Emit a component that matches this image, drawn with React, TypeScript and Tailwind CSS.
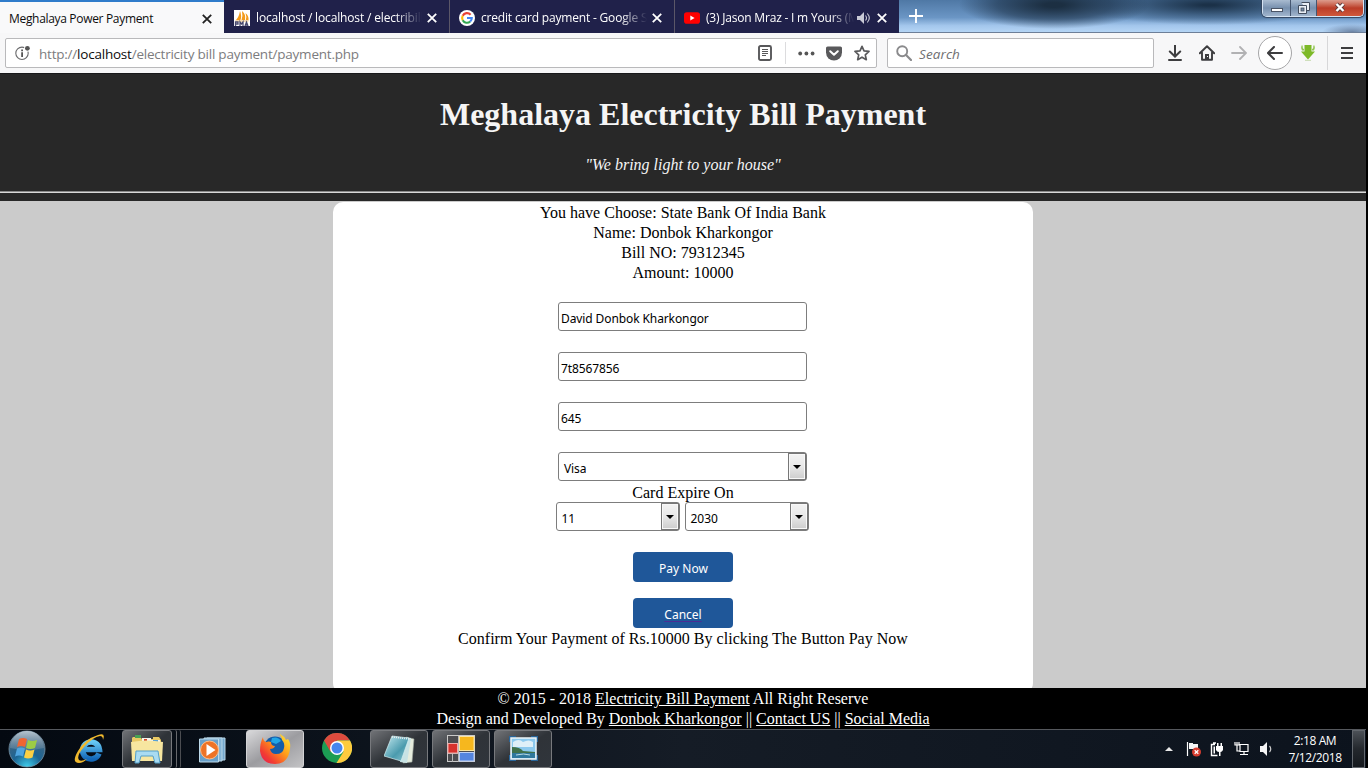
import React from 'react';

const SANS = "font-['Open_Sans','Noto_Sans',sans-serif]";

function Close({ color = '#fff' }: { color?: string }) {
  return (
    <svg width="10" height="10" viewBox="0 0 10 10" className="shrink-0">
      <path d="M.8.8 9.2 9.2M9.2.8.8 9.2" stroke={color} strokeWidth="1.8" fill="none" />
    </svg>
  );
}

function PmaIcon() {
  return (
    <svg width="16" height="16" viewBox="0 0 16 16">
      <rect width="16" height="16" fill="#fff" />
      <path d="M2 10Q5 7 6 1Q8 6 6.5 10zM7.5 10Q9 6 8 1Q12 4 11 10zM11.8 10Q13 7 11.5 3Q15 6 14.5 10z" fill="#f39b1c" />
      <path d="M1 10.5h14l-1 1H2z" fill="#e7b465" />
      <path d="M1.500 16v-4h2.500v2H1.500M6 16v-4l1.500 2L9 12v4M11 16l1.500-4 1.500 4M11.500 15h2" stroke="#47486e" strokeWidth="1.300" fill="none" />
    </svg>
  );
}

function GoogleIcon() {
  return (
    <svg width="16" height="16" viewBox="0 0 16 16">
      <circle cx="8" cy="8" r="8" fill="#fff" />
      <g fill="none" strokeWidth="2.1">
        <path d="M11.6 4.7A4.8 4.8 0 0 0 3.7 5.8" stroke="#ea4335" />
        <path d="M3.7 5.8a4.8 4.8 0 0 0 0 4.4" stroke="#fbbc05" />
        <path d="M3.7 10.2a4.8 4.8 0 0 0 7.5 1.3" stroke="#34a853" />
        <path d="M11.2 11.5A4.8 4.8 0 0 0 12.8 8H8" stroke="#4285f4" />
      </g>
    </svg>
  );
}

function YouTubeIcon() {
  return (
    <svg width="16" height="16" viewBox="0 0 16 16">
      <rect y="2.3" width="16" height="11.4" rx="2.8" fill="#f00" />
      <path d="M6.3 5.6 10.6 8l-4.3 2.4z" fill="#fff" />
    </svg>
  );
}

function Speaker() {
  return (
    <svg width="14" height="12" viewBox="0 0 14 12" className="shrink-0">
      <path d="M0 4h3l4-4v12L3 8H0z" fill="#c9cad6" />
      <path d="M8.500 3.500Q10.500 6 8.500 8.500M10.300 1.500Q14.300 6 10.300 10.500" stroke="#c9cad6" strokeWidth="1.100" fill="none" />
    </svg>
  );
}

function Tab({ icon, title, width, line, audio }: { icon: React.ReactNode; title: React.ReactNode; width: string; line: string; audio?: boolean }) {
  return (
    <div className={`${line} flex h-[33px] w-[225px] items-center border-l bg-[#20214a] pt-[3px] pr-[12px] pl-[9px]`}>
      <div className="w-[22px] shrink-0">{icon}</div>
      <div className={`${width} overflow-hidden text-[12px] whitespace-nowrap text-white [mask-image:linear-gradient(to_right,#000_84%,transparent)]`}>
        {title}
      </div>
      <div className="ml-auto flex items-center gap-[6px]">
        {audio && <Speaker />}
        <Close />
      </div>
    </div>
  );
}

function TitleBar() {
  return (
    <div className="flex h-[33px] bg-[#20214a]">
      <div className="flex h-[33px] w-[224px] items-center justify-between border-t-2 border-[#2f7ccb] bg-[#f9f9fa] pt-[2px] pr-[12px] pl-[9px]">
        <span className="text-[12px] tracking-[-0.32px] whitespace-nowrap text-[#0c0c0d]">Meghalaya Power Payment</span>
        <Close color="#222" />
      </div>
      <Tab icon={<PmaIcon />} line="border-transparent" width="w-[166px]" title={<span className="tracking-[-0.15px]">localhost / localhost / electribill</span>} />
      <Tab icon={<GoogleIcon />} line="border-[#5b5768]" width="w-[166px]" title={<span className="tracking-[-0.18px]">credit card payment - Google S</span>} />
      <Tab icon={<YouTubeIcon />} line="border-[#5b5768]" width="w-[148px]" audio title={<span className="tracking-[-0.2px]">(3) Jason Mraz - I m Yours (M</span>} />
      <div className="flex h-[33px] flex-1 justify-between border-b border-[#6d7f98] bg-[radial-gradient(ellipse_30px_8px_at_453px_32px,#6b83a4,transparent),radial-gradient(ellipse_95px_24px_at_155px_5px,#1c2f42_10%,#1c314899_60%,transparent),radial-gradient(ellipse_130px_20px_at_310px_5px,#1b3148_5%,#26415d99_50%,transparent),linear-gradient(to_bottom,#4f78a5,#6b96c5_55%,#a3c6ec_80%,#b5d5f5)] pr-[2px] pl-[10px]">
        <svg width="14" height="14" viewBox="0 0 14 14" className="mt-[9px]">
          <path d="M7 0v14M0 7h14" stroke="#fff" strokeWidth="1.900" />
        </svg>
        <div className="flex h-[17px] w-[102px] overflow-hidden rounded-b-[5px] border border-t-0 border-[#d5e3f2] shadow-[0_0_1px_1px_#33455f]">
          <div className="flex w-[28px] items-end justify-center border-r border-[#455670] bg-linear-to-b from-[#a9bbd0] via-[#7790ae] to-[#a1b5cd] pb-[4px]">
            <div className="h-[4px] w-[12px] border border-[#4b5566] bg-white" />
          </div>
          <div className="flex w-[26px] justify-center border-r border-[#455670] bg-linear-to-b from-[#a9bbd0] via-[#7790ae] to-[#a1b5cd] pt-[2px]">
            <svg width="12" height="12" viewBox="0 0 12 12">
              <path d="M3.500.5h8v8h-3M.5 3.500h8v8h-8z" fill="#e9eef5" stroke="#414c5d" />
              <rect x="3" y="6" width="3" height="3" fill="#728aa5" stroke="#414c5d" strokeWidth=".8" />
            </svg>
          </div>
          <div className="flex flex-1 justify-center bg-linear-to-b from-[#dc9c8d] via-[#bb3d28] to-[#d0583b] pt-[2px]">
            <svg width="12" height="11" viewBox="0 0 12 11">
              <path d="M2.500 2 9.500 9M9.500 2l-7 7" stroke="#5b3b3b" strokeWidth="4" />
              <path d="M2.500 2 9.500 9M9.500 2l-7 7" stroke="#fff" strokeWidth="2.400" />
            </svg>
          </div>
        </div>
      </div>
    </div>
  );
}

function ToolBar() {
  return (
    <div className="flex h-[41px] items-center border-b border-[#18181a] bg-[#f7f7f8] pl-[5px]">
      <div className="flex h-[30px] w-[872px] items-center rounded-[2px] border border-[#b9b9bb] bg-white pl-[9px]">
        <svg width="16" height="16" viewBox="0 0 16 16">
          <circle cx="7" cy="8.300" r="6.200" fill="none" stroke="#6a6a6c" strokeWidth="1.100" />
          <circle cx="12.400" cy="3.300" r="3.400" fill="#fff" />
          <circle cx="12.400" cy="3.300" r="2.400" fill="#555" />
          <path d="M6.200 7.200h1.800v4.800H6.200zM6.200 4.600h1.800v1.600H6.200z" fill="#555" />
        </svg>
        <span className="ml-[8px] pt-[2px] text-[13.5px] tracking-[-0.22px] whitespace-nowrap text-[#7c7c7e]">
          http://<span className="text-[#0c0c0d]">localhost</span>/electricity bill payment/payment.php
        </span>
        <div className="ml-auto flex items-center pr-[6px]">
          <svg width="14" height="16" viewBox="0 0 14 16">
            <rect x="1" y="1" width="12" height="14" rx="1.500" fill="none" stroke="#58585a" strokeWidth="1.900" />
            <path d="M4 4.500h6M4 6.500h6M4 8.500h6M4 10.500h4" stroke="#58585a" />
          </svg>
          <div className="ml-[13px] h-[22px] w-px bg-[#dcdcde]" />
          <svg width="17" height="5" viewBox="0 0 17 5" className="ml-[12px]">
            <circle cx="2.200" cy="2.500" r="1.900" fill="#555" />
            <circle cx="8.400" cy="2.500" r="1.900" fill="#555" />
            <circle cx="14.600" cy="2.500" r="1.900" fill="#555" />
          </svg>
          <svg width="16" height="15" viewBox="0 0 16 15" className="ml-[11px]">
            <path d="M1.600.5h12.800Q16 .5 16 2v4.500a8 8 0 0 1-16 0V2Q0 .5 1.600.5z" fill="#59595b" />
            <path d="m4.200 5.200 3.800 3.600 3.800-3.600" stroke="#fff" strokeWidth="2" fill="none" strokeLinecap="round" strokeLinejoin="round" />
          </svg>
          <svg width="16" height="16" viewBox="0 0 16 16" className="ml-[12px]">
            <path d="m8 1.300 2 4.600 5 .5-3.700 3.400 1 4.900L8 12.200l-4.300 2.500 1-4.900L1 6.400l5-.5z" fill="none" stroke="#59595b" strokeWidth="1.700" strokeLinejoin="round" />
          </svg>
        </div>
      </div>
      <div className="ml-[10px] flex h-[30px] w-[267px] items-center rounded-[2px] border border-[#b9b9bb] bg-white pl-[8px]">
        <svg width="16" height="16" viewBox="0 0 16 16">
          <circle cx="6.200" cy="6.200" r="5" fill="none" stroke="#8a8a8c" strokeWidth="1.900" />
          <path d="m9.800 9.800 5.200 5.200" stroke="#8a8a8c" strokeWidth="2.200" strokeLinecap="round" />
        </svg>
        <span className="ml-[7px] pt-[2px] text-[13.5px] tracking-[0.1px] text-[#6f6f71] italic">Search</span>
      </div>
      <svg width="14" height="16" viewBox="0 0 14 16" className="ml-[14px]">
        <path d="M7 0v11M1.800 6.500 7 11.500l5.200-5M1 15h12" stroke="#3d3d3f" strokeWidth="2" fill="none" strokeLinecap="round" />
      </svg>
      <svg width="16" height="16" viewBox="0 0 16 16" className="ml-[17px]">
        <path d="M.8 8.300 8 1.200l7.200 7.100M3 7.500v7.300h10V7.500" stroke="#3d3d3f" strokeWidth="1.900" fill="none" strokeLinejoin="round" strokeLinecap="round" />
        <path d="M6 14V9h4v5z" fill="#3d3d3f" />
        <path d="M8 11h1v1H8z" fill="#fff" />
      </svg>
      <svg width="16" height="14" viewBox="0 0 16 14" className="ml-[16px]">
        <path d="M1 7h14M9 1l6 6-6 6" stroke="#b1b1b3" strokeWidth="1.800" fill="none" strokeLinecap="round" />
      </svg>
      <div className="ml-[11px] flex h-[34px] w-[34px] items-center justify-center rounded-full border border-[#a5a5a7] bg-white">
        <svg width="16" height="14" viewBox="0 0 16 14">
          <path d="M15 7H1M7 1 1 7l6 6" stroke="#3d3d3f" strokeWidth="2" fill="none" strokeLinecap="round" />
        </svg>
      </div>
      <svg width="16" height="16" viewBox="0 0 16 16" className="ml-[8px]">
        <path d="M1.500.5Q.5 3 2 5.500h2V4Q2.500 4 2.700.5zM14.500.5q1 2.500-.5 5h-2V4q1.500 0 1.300-3.500z" fill="#93c653" />
        <path d="M4.500 0h7v6.500H15L8 14.500 1 6.500h3.500z" fill="#7db928" />
        <path d="M5 15.300h6" stroke="#c5d9ac" />
      </svg>
      <div className="ml-[11px] h-[34px] w-px bg-[#d7d7d9]" />
      <svg width="12" height="12" viewBox="0 0 12 12" className="ml-[13px]">
        <path d="M0 1h12M0 6h12M0 11h12" stroke="#3d3d3f" strokeWidth="1.900" />
      </svg>
    </div>
  );
}

function Field({ value }: { value: string }) {
  return (
    <div className="mb-[21px] flex h-[29px] w-[249px] items-center rounded-[3px] border border-[#7d7d7d] bg-white pt-[5px] pl-[2px]">
      {value}
    </div>
  );
}

function Select({ value, width }: { value: string; width: string }) {
  return (
    <div className={`${width} flex h-[29px] items-center justify-between rounded-[3px] border border-[#7d7d7d] bg-white pl-[5px]`}>
      <span className="pt-[5px]">{value}</span>
      <div className="flex h-[27px] w-[18px] items-center justify-center border border-[#777] bg-linear-to-b from-[#f3f3f3] via-[#e8e8e8] to-[#cdcdcd] shadow-[inset_0_0_0_1px_#f8f8f8]">
        <svg width="8" height="4" viewBox="0 0 8 4">
          <path d="M0 0h8L4 4z" fill="#000" />
        </svg>
      </div>
    </div>
  );
}

function PaymentPage() {
  return (
    <div className="flex h-[655px] flex-col font-['Liberation_Serif','Times_New_Roman',serif] text-[16px] leading-[20px] text-black">
      <header className="h-[127px] bg-[#282828] text-center text-[#f5f5f5]">
        <h1 className="pt-[22px] text-[32px] leading-[37px] font-bold">Meghalaya Electricity Bill Payment</h1>
        <p className="mt-[22px] italic">"We bring light to your house"</p>
        <div className="mt-[16px] h-[2px] border-t border-b border-t-[#8a8a8a] border-b-[#d8d8d8]" />
      </header>
      <main className="flex h-[487px] justify-center overflow-hidden bg-[#cbcbcb] pt-px">
        <div className="flex h-[491px] w-[700px] flex-col items-center rounded-[10px] bg-white pt-px text-center">
          <p>You have Choose: State Bank Of India Bank</p>
          <p>Name: Donbok Kharkongor</p>
          <p>Bill NO: 79312345</p>
          <p>Amount: 10000</p>
          <div className="mt-[19px] mr-px flex flex-col font-['Noto_Sans','Open_Sans',sans-serif] text-[12px] tracking-[-0.1px]">
            <Field value="David Donbok Kharkongor" />
            <Field value="7t8567856" />
            <Field value="645" />
            <Select value="Visa" width="w-[249px]" />
          </div>
          <p className="mt-[2px] leading-[19px]">Card Expire On</p>
          <div className="mr-[2px] flex gap-[5px] font-['Noto_Sans','Open_Sans',sans-serif] text-[12px]">
            <Select value="11" width="w-[124px]" />
            <Select value="2030" width="w-[124px]" />
          </div>
          <button className="mt-[21px] h-[30px] w-[100px] shrink-0 rounded-[4px] bg-[#1f5799] pt-[3px] pl-px font-['Noto_Sans','Open_Sans',sans-serif] text-[12px] text-white">Pay Now</button>
          <button className="mt-[16px] h-[30px] w-[100px] shrink-0 rounded-[4px] bg-[#1f5799] pt-[3px] font-['Noto_Sans','Open_Sans',sans-serif] text-[12px] text-white">
            <span className="underline decoration-[#4c2d94] underline-offset-2">Cancel</span>
          </button>
          <p className="pt-px tracking-[0.02px]">Confirm Your Payment of Rs.10000 By clicking The Button Pay Now</p>
        </div>
      </main>
      <footer className="h-[41px] bg-black pt-px text-center text-white">
        <p>© 2015 - 2018 <u>Electricity Bill Payment</u> All Right Reserve</p>
        <p>Design and Developed By <u>Donbok Kharkongor</u> || <u>Contact US</u> || <u>Social Media</u></p>
      </footer>
    </div>
  );
}

function StartOrb() {
  return (
    <svg width="38" height="38" viewBox="0 0 38 38">
      <defs>
        <radialGradient id="orb" cx=".5" cy="1" r=".9">
          <stop offset="0" stopColor="#3fd0ee" />
          <stop offset=".45" stopColor="#1c6594" />
          <stop offset="1" stopColor="#48647c" />
        </radialGradient>
        <linearGradient id="gloss" x2="0" y2="1">
          <stop stopColor="#c9d5de" stopOpacity=".85" />
          <stop offset="1" stopColor="#7c95a9" stopOpacity=".35" />
        </linearGradient>
      </defs>
      <circle cx="19" cy="19" r="18" fill="url(#orb)" stroke="#7993a5" strokeWidth=".8" />
      <path d="M2 18a17 17 0 0 1 34 0Q19 22 2 18z" fill="url(#gloss)" />
      <path d="M11 9q4-2 8 0l-2 8q-4-2-8 0z" fill="#ef6532" />
      <path d="M20 10q4 2 9 0l-2 8q-5 2-9 0z" fill="#9ccc45" />
      <path d="M9 18.500q4-2 8 0l-2 8q-4-2-8 0z" fill="#4fa5df" />
      <path d="M18 19.500q4 2 8.500 0l-2 8q-4.500 2-8.500 0z" fill="#fcd044" />
    </svg>
  );
}

function IeIcon() {
  return (
    <svg width="34" height="32" viewBox="0 0 34 32">
      <defs>
        <linearGradient id="ie" x2="0" y2="1">
          <stop stopColor="#67c9f3" />
          <stop offset="1" stopColor="#1267b8" />
        </linearGradient>
      </defs>
      <path d="M26 20.500A8.500 8.500 0 1 1 26.500 16.500H12" fill="none" stroke="url(#ie)" strokeWidth="5.500" />
      <path d="M30 7Q33-1 25 2 12 6 5 18-2 30 6 30q4 0 8-4-6 3-8 1-3-4 5-13Q20 4 27 3q3 0 3 4z" fill="#f0b92e" />
    </svg>
  );
}

function ExplorerIcon() {
  return (
    <svg width="32" height="30" viewBox="0 0 32 30">
      <path d="M2 3h7l2 2h11V3h6l2 3v21H1V4z" fill="#e9c965" />
      <path d="M11 4h9v8h-9zM20 6h9v6h-9z" fill="#f3f4ec" />
      <path d="M4 1h6v3H4z" fill="#4aa254" />
      <path d="M13 5h3v2h-3z" fill="#d8472e" />
      <path d="M22 6h5v2h-5z" fill="#56a2d8" />
      <path d="M0 8q16-3 32 0l-1 19H1z" fill="#f7e6a0" />
      <path d="M5 17h22l2 12h-5l-2-7H10l-2 7H4z" fill="#a9dbf2" stroke="#559fc8" />
    </svg>
  );
}

function MediaIcon() {
  return (
    <svg width="27" height="26" viewBox="0 0 27 26">
      <path d="M8 1h18v22H8z" fill="#75a8cd" stroke="#b8d7e9" />
      <path d="M5 1h18v23H5z" fill="#85b5d6" stroke="#b8d7e9" />
      <path d="M.5 2h19v23H.5z" fill="#68a0ca" stroke="#bddaea" />
      <circle cx="10.500" cy="13" r="9" fill="#ee7326" stroke="#ffbe87" />
      <path d="m7.500 7 9 6-9 6z" fill="#fff" />
    </svg>
  );
}

function FirefoxIcon() {
  return (
    <svg width="32" height="31" viewBox="0 0 32 31">
      <defs>
        <linearGradient id="fox" x1="1" y1="0" x2="0" y2="1">
          <stop stopColor="#ffef3d" />
          <stop offset=".4" stopColor="#ffa019" />
          <stop offset=".75" stopColor="#f33c32" />
          <stop offset="1" stopColor="#e0175f" />
        </linearGradient>
      </defs>
      <circle cx="16" cy="13.500" r="11" fill="#145da9" />
      <path d="M13 4q6-2 9 3l-5 3-5-2z" fill="#20a6e6" />
      <path d="M4 3q0 4 3 5 3-1 5 0 0 4 4 4-1 3-5 3 1 5 6 5 7 0 8-6 1-5-2-8 0-3-2-5V0q4 2 6 6l2-1q3 4 2 10-2 15-15 15T1 17Q1 9 4 3z" fill="url(#fox)" />
    </svg>
  );
}

function ChromeIcon() {
  return (
    <svg width="30" height="30" viewBox="0 0 30 30">
      <circle cx="15" cy="15" r="15" fill="#1c9d54" />
      <path d="M2 7.500A15 15 0 0 1 28 7.500H15L8.500 18.800z" fill="#dd4b3e" />
      <path d="M28 7.500A15 15 0 0 1 14.500 30l7-11.200L15 7.500z" fill="#fecb3e" />
      <circle cx="15" cy="15" r="7" fill="#fff" />
      <circle cx="15" cy="15" r="5.500" fill="#4586ef" />
    </svg>
  );
}

function NotepadIcon() {
  return (
    <svg width="31" height="29" viewBox="0 0 31 29">
      <defs>
        <linearGradient id="note" x2="1" y2="1">
          <stop stopColor="#c5eaf0" />
          <stop offset=".6" stopColor="#4b9bae" />
          <stop offset="1" stopColor="#8fc8d2" />
        </linearGradient>
      </defs>
      <path d="m22 2 8 2-2 23-9 1z" fill="#e5ecdd" stroke="#9aa39b" strokeWidth=".6" />
      <path d="m20 3 7 0-4 25-7-1z" fill="#c7e2e4" />
      <path d="M8 1 25 3 17 26 0 21z" fill="url(#note)" stroke="#d4eff2" strokeWidth=".7" />
      <path d="m8 2 17 2" stroke="#eee" strokeWidth="1.500" strokeDasharray="1 1" />
    </svg>
  );
}

function BlocksIcon() {
  return (
    <svg width="28" height="28" viewBox="0 0 28 28">
      <rect x=".5" y=".5" width="27" height="26" fill="#4d4d50" stroke="#c9c9c9" />
      <path d="M5.500 18.500V27M1 18.500h11M11.500 1v26" stroke="#bbb" />
      <rect x="12.500" y="1.500" width="14.500" height="14" fill="#f6b71e" stroke="#fbe5a0" />
      <rect x="1" y="8.500" width="9.500" height="9.500" fill="#d8322c" stroke="#f1aaa6" />
      <rect x="12.500" y="17.500" width="14.500" height="8.500" fill="#5585df" stroke="#bed0f4" />
    </svg>
  );
}

function PictureIcon() {
  return (
    <svg width="29" height="26" viewBox="0 0 29 26">
      <path d="M0 0h7v6H0zM22 0h7v6h-7zM0 19h7v6H0zM22 19h7v6h-7z" fill="#28659a" />
      <rect x="2" y="2" width="25" height="21" fill="#8cc9ee" stroke="#edf5f8" strokeWidth="1.500" />
      <path d="M4 6q6-4 10 0 6-3 10 0v5H4z" fill="#deeff8" />
      <path d="M3 11q8 0 11 4l12 1v2H3z" fill="#40714b" />
      <path d="M3 17h23v5H3z" fill="#2f789d" />
      <path d="M7 19q8-2 14 0" stroke="#b8dae3" fill="none" />
    </svg>
  );
}

function TaskButton({ children, width, active }: { children: React.ReactNode; width: string; active?: boolean }) {
  const tone = active
    ? 'border-[#d3d3d5] bg-linear-to-br from-[#d9d9db] via-[#9c9ca0] to-[#c3c3c5]'
    : 'border-[#77797d] bg-linear-to-br from-[#717377] via-[#2f3338] to-[#30353c]';
  return <div className={`${width} ${tone} flex h-[38px] shrink-0 items-center justify-center rounded-[3px] border`}>{children}</div>;
}

function Tray() {
  return (
    <div className="ml-auto flex h-full items-center">
      <svg width="8" height="4" viewBox="0 0 8 4">
        <path d="M0 4 4 0l4 4z" fill="#e8e8e8" />
      </svg>
      <svg width="15" height="15" viewBox="0 0 15 15" className="ml-[13px]">
        <path d="M1.500 0v14" stroke="#fff" strokeWidth="1.200" />
        <path d="M3 1h4v1h5v6H8V7H3z" fill="#f5f5f5" />
        <circle cx="10.500" cy="10" r="4.500" fill="#d63d30" />
        <path d="m8.700 8.200 3.600 3.600M12.300 8.200l-3.600 3.600" stroke="#fff" strokeWidth="1.300" />
      </svg>
      <svg width="14" height="15" viewBox="0 0 14 15" className="ml-[9px]">
        <path d="M5 2.500H1.500v11h6M3 1h3" stroke="#fff" strokeWidth="1.400" fill="none" />
        <path d="M3.500 4.500H5v7H3.500zM6 4h7v4q-1 2-2.500 2v4H9v-4Q7 10 6 8zM7 1h1.500v3H7zM10.500 1H12v3h-1.500z" fill="#fff" />
      </svg>
      <svg width="15" height="14" viewBox="0 0 15 14" className="ml-[10px]">
        <path d="M1 0v3h4V0M3 0v9h3M6 2.500h8v7H6zM10 10v2.500M6 12.500h8" stroke="#fff" strokeWidth="1.200" fill="none" />
      </svg>
      <svg width="13" height="14" viewBox="0 0 13 14" className="ml-[11px]">
        <path d="M0 4h3l4-4v14l-4-4H0z" fill="#f5f5f5" />
        <path d="M9.500 4Q12 7 9.500 10" stroke="#c9c9c9" strokeWidth="1.200" fill="none" />
      </svg>
      <div className="ml-[14px] w-[56px] text-center text-[12px] leading-[17px] tracking-[-0.4px] whitespace-nowrap text-white">
        <div>2:18 AM</div>
        <div>7/12/2018</div>
      </div>
      <div className="ml-[9px] h-[38px] w-[13px] border border-[#62676d] bg-linear-to-b from-[#4c5157] via-[#24282d] to-[#15191e]" />
      <div className="w-px" />
    </div>
  );
}

function TaskBar() {
  return (
    <div className="flex h-[39px] items-start border-t border-[#55585d] bg-linear-to-r from-[#040911] via-[#151c26] to-[#0c131d] pl-[8px]">
      <StartOrb />
      <div className="mt-[3px] ml-[27px]"><IeIcon /></div>
      <div className="ml-[15px] flex gap-[2px]">
        <TaskButton width="w-[50px]"><ExplorerIcon /></TaskButton>
        <div className="h-[38px] w-[3px] rounded-r-[2px] border-r border-[#67696d]" />
        <div className="h-[38px] w-[2px] rounded-r-[2px] border-r border-[#4b4d51]" />
      </div>
      <div className="mt-[7px] ml-[18px]"><MediaIcon /></div>
      <div className="ml-[20px]"><TaskButton width="w-[58px]" active><FirefoxIcon /></TaskButton></div>
      <div className="mt-[3px] ml-[18px]"><ChromeIcon /></div>
      <div className="ml-[18px] flex gap-[4px]">
        <TaskButton width="w-[58px]"><NotepadIcon /></TaskButton>
        <TaskButton width="w-[58px]"><BlocksIcon /></TaskButton>
        <TaskButton width="w-[58px]"><PictureIcon /></TaskButton>
      </div>
      <Tray />
    </div>
  );
}

export default function App() {
  return (
    <div className="h-[768px] w-[1368px] overflow-hidden bg-black">
      <div className={`flex h-[768px] w-[1366px] flex-col ${SANS}`}>
        <TitleBar />
        <ToolBar />
        <PaymentPage />
        <TaskBar />
      </div>
    </div>
  );
}
